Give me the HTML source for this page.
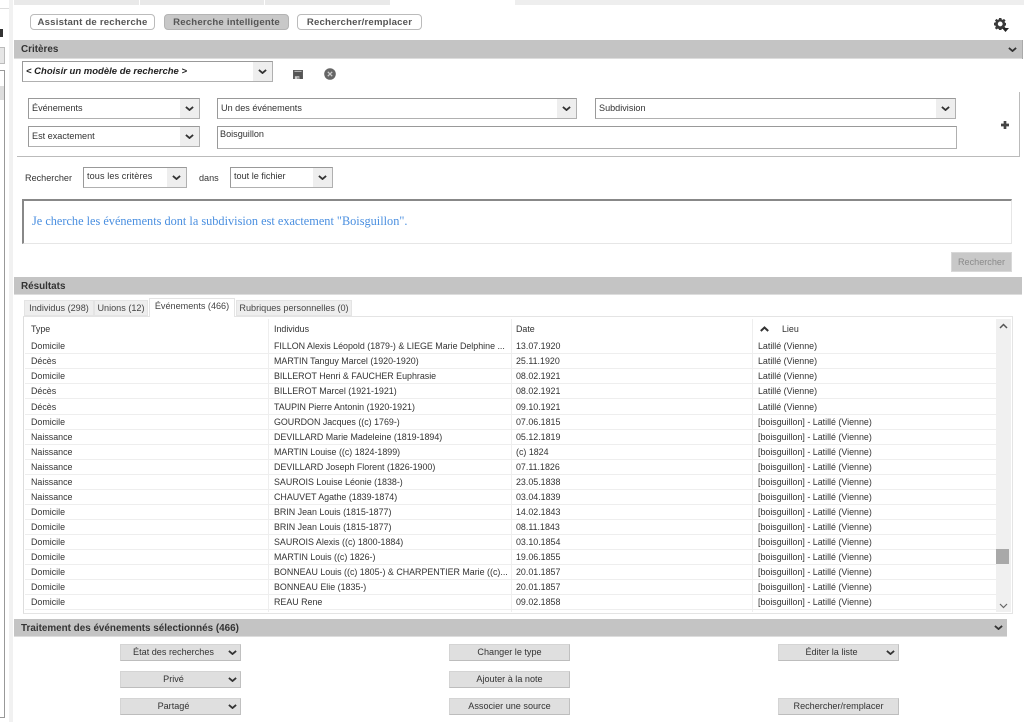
<!DOCTYPE html>
<html lang="fr"><head><meta charset="utf-8"><title>Recherche</title>
<style>
html,body{margin:0;padding:0;background:#fff;width:1024px;height:722px;overflow:hidden}
#p{position:relative;width:1024px;height:722px;overflow:hidden;font-family:"Liberation Sans",sans-serif;font-size:9.1px;color:#333;filter:blur(.35px)}
#p div,#p span,#p svg{position:absolute;box-sizing:border-box;white-space:nowrap}
.band{background:#c4c4c4;height:18px;font-weight:bold;font-size:9.9px;color:#333;line-height:20px;padding-left:7px;border-bottom:1px solid #ddd}
.tb{top:14px;height:16px;width:125px;border:1px solid #bbb;border-radius:4px;text-align:center;line-height:15px;font-size:9.6px;font-weight:bold;color:#555;letter-spacing:.2px}
.sel{height:21px;border:1px solid #b0b0b0;border-top:1.5px solid #999;border-left:1.5px solid #999;background:#fff;line-height:18px;padding-left:3px;color:#333}
.sel i{position:absolute;right:0;top:0;bottom:0;width:19px;background:#eee}
.sel svg{right:5px;top:7px;width:9px;height:5.4px}
.tab{top:300px;height:16px;background:#eee;border:1px solid #e4e4e4;text-align:center;line-height:15px;color:#444;font-size:9.1px}
.btn{width:121px;height:17px;background:#dfdfdf;border:1px solid #d4d4d4;border-right-color:#c0c0c0;border-bottom-color:#bdbdbd;text-align:center;line-height:15px;color:#333;font-size:9.1px}
.btn.d{padding-right:14px}
.btn svg{right:3px;top:5px;width:9px;height:5.4px}
.r{left:25px;width:971px;height:15.05px;border-bottom:1px solid #eee;line-height:14px;font-size:8.9px}
.r span{top:0}
.a{left:6px}.b{left:249px}.c{left:491px}.e{left:733px}
</style></head><body><div id="p">

<!-- top strip -->
<div style="left:14px;top:0;width:125px;height:5px;background:#e9e9e9"></div>
<div style="left:140px;top:0;width:124px;height:5px;background:#e9e9e9"></div>
<div style="left:265px;top:0;width:125px;height:5px;background:#e9e9e9"></div>
<div style="left:515px;top:0;width:509px;height:5px;background:#eee"></div>

<!-- left sidebar -->
<div style="left:9px;top:0;width:4px;height:722px;background:#f1f1f1"></div>
<div style="left:0;top:8px;width:9px;height:1px;background:#ddd"></div>
<div style="left:0;top:29px;width:3px;height:8px;background:#333"></div>
<div style="left:0;top:47px;width:5px;height:17px;background:#e6e6e6;border:1px solid #bbb;border-left:0"></div>
<div style="left:0;top:70px;width:5px;height:648px;background:#fff;border:1px solid #999;border-left:0"></div>
<div style="left:0;top:86px;width:4px;height:14px;background:#ddd"></div>

<!-- top buttons -->
<div class="tb" style="left:30px">Assistant de recherche</div>
<div class="tb" style="left:164px;background:#c8c8c8;border-color:#b4b4b4">Recherche intelligente</div>
<div class="tb" style="left:297px">Rechercher/remplacer</div>
<svg style="left:994px;top:18px" width="12" height="12" viewBox="-0.5 0 13.500 13.500"><path fill="#3a3a3a" fill-rule="evenodd" d="M5.200 0h2.600l.3 1.600 1.200.5L10.700 1l1.800 1.800-1.100 1.400.5 1.200 1.600.3v2.600l-1.600.3-.5 1.200 1.100 1.400-1.800 1.800-1.400-1.100-1.200.5-.3 1.600H5.200l-.3-1.600-1.200-.5-1.400 1.100-1.800-1.800 1.100-1.400-.5-1.200-1.600-.3V5.300l1.600-.3.500-1.200L.5 2.800 2.300 1l1.400 1.100 1.200-.5zM6.500 4a2.700 2.700 0 1 0 0 5.400 2.700 2.700 0 0 0 0-5.400z"/></svg>
<svg style="left:1002px;top:28px;z-index:3" width="7" height="4" viewBox="0 0 7 4"><path fill="#222" d="M0 0h7L3.500 4z"/></svg>

<!-- Critères -->
<div class="band" style="left:14px;top:40px;width:1008px;height:19px">Critères</div>
<div style="left:1022px;top:40px;width:1px;height:19px;background:#aaa"></div>
<svg style="left:1008px;top:47px" width="9" height="5.400" viewBox="0 0 10 6"><path d="M1 1l4 3.500L9 1" fill="none" stroke="#333" stroke-width="2"/></svg>

<div class="sel" style="left:22px;top:61px;width:251px;font-weight:bold;font-style:italic;color:#222;font-size:9.500px;line-height:19px"> &lt; Choisir un modèle de recherche &gt;<i></i><svg viewBox="0 0 10 6"><path d="M1 1l4 3.500L9 1" fill="none" stroke="#333" stroke-width="2"/></svg></div>
<svg style="left:293px;top:70px" width="10" height="9" viewBox="0 0 11 10"><path fill="#555" d="M0 0h11v10H0z"/><path fill="#ccc" d="M1.500 1h8v1h-8zM2 7h5v3H2z"/><path fill="#555" d="M5 8h1v2H5z"/></svg>
<svg style="left:324px;top:68px" width="12" height="12" viewBox="0 0 12 12"><circle cx="6" cy="6" r="5.800" fill="#666"/><path d="M3.800 3.800l4.400 4.400M8.200 3.800L3.800 8.200" stroke="#ccc" stroke-width="1.300"/></svg>

<div style="left:17px;top:156px;width:1003px;height:1px;background:#bbb"></div>
<div style="left:1019px;top:92px;width:1px;height:65px;background:#bbb"></div>

<div class="sel" style="left:28px;top:98px;width:172px">Événements<i></i><svg viewBox="0 0 10 6"><path d="M1 1l4 3.500L9 1" fill="none" stroke="#333" stroke-width="2"/></svg></div>
<div class="sel" style="left:217px;top:98px;width:360px">Un des événements<i></i><svg viewBox="0 0 10 6"><path d="M1 1l4 3.500L9 1" fill="none" stroke="#333" stroke-width="2"/></svg></div>
<div class="sel" style="left:595px;top:98px;width:361px">Subdivision<i></i><svg viewBox="0 0 10 6"><path d="M1 1l4 3.500L9 1" fill="none" stroke="#333" stroke-width="2"/></svg></div>
<div class="sel" style="left:28px;top:126px;width:172px">Est exactement<i></i><svg viewBox="0 0 10 6"><path d="M1 1l4 3.500L9 1" fill="none" stroke="#333" stroke-width="2"/></svg></div>
<div class="sel" style="left:217px;top:126px;width:740px;height:23px;line-height:15px;padding-left:2px">Boisguillon</div>
<svg style="left:1001px;top:121px" width="8" height="8" viewBox="0 0 9 9"><path fill="#444" d="M3 0h3v3h3v3H6v3H3V6H0V3h3z"/></svg>

<span style="left:25px;top:172px;line-height:12px">Rechercher</span>
<div class="sel" style="left:83px;top:167px;width:104px;line-height:16px;letter-spacing:.1px">tous les critères<i></i><svg viewBox="0 0 10 6"><path d="M1 1l4 3.500L9 1" fill="none" stroke="#333" stroke-width="2"/></svg></div>
<span style="left:199px;top:172px;line-height:12px">dans</span>
<div class="sel" style="left:230px;top:167px;width:103px;line-height:16px">tout le fichier<i></i><svg viewBox="0 0 10 6"><path d="M1 1l4 3.500L9 1" fill="none" stroke="#333" stroke-width="2"/></svg></div>

<div style="left:22px;top:199px;width:990px;height:45px;border:1px solid #e6e6e6;border-top:2px solid #888;border-left:2px solid #888;background:#fff"></div>
<span style="left:32px;top:213px;font-family:'Liberation Serif',serif;font-size:12.300px;line-height:16px;color:#4a8fe0">Je cherche les événements dont la subdivision est exactement "Boisguillon".</span>

<div style="left:951px;top:252px;width:61px;height:20px;background:#c8c8c8;border:1px solid #d8d8d8;color:#8a8a8a;text-align:center;line-height:18px;font-size:9.100px">Rechercher</div>

<!-- Résultats -->
<div class="band" style="left:14px;top:277px;width:1008px">Résultats</div>
<div class="tab" style="left:24px;width:70px">Individus (298)</div>
<div class="tab" style="left:94px;width:54px">Unions (12)</div>
<div class="tab" style="left:149px;top:298px;width:86px;height:19px;background:#fff;z-index:2;border-bottom:0;line-height:14px">Événements (466)</div>
<div class="tab" style="left:236px;width:116px">Rubriques personnelles (0)</div>

<div style="left:23px;top:316px;width:990px;height:298px;border:1px solid #e4e4e4;border-left-color:#ddd;background:#fff"></div>
<div style="left:996px;top:319px;width:15px;height:293px;background:#f0f0f0"></div>
<div style="left:996px;top:549px;width:13px;height:15px;background:#a9a9a9"></div>
<svg style="left:999px;top:323px" width="9" height="6" viewBox="0 0 9 6"><path d="M1 5l3.500-3.500L8 5" fill="none" stroke="#555" stroke-width="1.500"/></svg>
<svg style="left:999px;top:603px" width="9" height="6" viewBox="0 0 9 6"><path d="M1 1l3.500 3.500L8 1" fill="none" stroke="#666" stroke-width="1.200"/></svg>

<div style="left:268px;top:319px;width:1px;height:293px;background:#eee"></div>
<div style="left:752px;top:319px;width:1px;height:293px;background:#eee"></div>
<div style="left:511px;top:319px;width:1px;height:293px;background:#eee"></div>

<span style="left:31px;top:323px;line-height:12px;font-size:8.900px">Type</span>
<span style="left:274px;top:323px;line-height:12px;font-size:8.900px">Individus</span>
<span style="left:516px;top:323px;line-height:12px;font-size:8.900px">Date</span>
<svg style="left:760px;top:326px" width="9" height="6" viewBox="0 0 9 6"><path d="M.8 5l3.700-3.500L8.200 5" fill="none" stroke="#333" stroke-width="2"/></svg>
<span style="left:782px;top:323px;line-height:12px;font-size:8.900px">Lieu</span>

<div class="r" style="top:339px"><span class="a">Domicile</span><span class="b">FILLON Alexis Léopold (1879-) &amp; LIEGE Marie Delphine ...</span><span class="c">13.07.1920</span><span class="e">Latillé (Vienne)</span></div>
<div class="r" style="top:354px"><span class="a">Décès</span><span class="b">MARTIN Tanguy Marcel (1920-1920)</span><span class="c">25.11.1920</span><span class="e">Latillé (Vienne)</span></div>
<div class="r" style="top:369px"><span class="a">Domicile</span><span class="b">BILLEROT Henri &amp; FAUCHER Euphrasie</span><span class="c">08.02.1921</span><span class="e">Latillé (Vienne)</span></div>
<div class="r" style="top:384px"><span class="a">Décès</span><span class="b">BILLEROT Marcel (1921-1921)</span><span class="c">08.02.1921</span><span class="e">Latillé (Vienne)</span></div>
<div class="r" style="top:399.500px"><span class="a">Décès</span><span class="b">TAUPIN Pierre Antonin (1920-1921)</span><span class="c">09.10.1921</span><span class="e">Latillé (Vienne)</span></div>
<div class="r" style="top:414.500px"><span class="a">Domicile</span><span class="b">GOURDON Jacques ((c) 1769-)</span><span class="c">07.06.1815</span><span class="e">[boisguillon] - Latillé (Vienne)</span></div>
<div class="r" style="top:429.500px"><span class="a">Naissance</span><span class="b">DEVILLARD Marie Madeleine (1819-1894)</span><span class="c">05.12.1819</span><span class="e">[boisguillon] - Latillé (Vienne)</span></div>
<div class="r" style="top:444.500px"><span class="a">Naissance</span><span class="b">MARTIN Louise ((c) 1824-1899)</span><span class="c">(c) 1824</span><span class="e">[boisguillon] - Latillé (Vienne)</span></div>
<div class="r" style="top:459.500px"><span class="a">Naissance</span><span class="b">DEVILLARD Joseph Florent (1826-1900)</span><span class="c">07.11.1826</span><span class="e">[boisguillon] - Latillé (Vienne)</span></div>
<div class="r" style="top:474.500px"><span class="a">Naissance</span><span class="b">SAUROIS Louise Léonie (1838-)</span><span class="c">23.05.1838</span><span class="e">[boisguillon] - Latillé (Vienne)</span></div>
<div class="r" style="top:489.500px"><span class="a">Naissance</span><span class="b">CHAUVET Agathe (1839-1874)</span><span class="c">03.04.1839</span><span class="e">[boisguillon] - Latillé (Vienne)</span></div>
<div class="r" style="top:504.500px"><span class="a">Domicile</span><span class="b">BRIN Jean Louis (1815-1877)</span><span class="c">14.02.1843</span><span class="e">[boisguillon] - Latillé (Vienne)</span></div>
<div class="r" style="top:519.600px"><span class="a">Domicile</span><span class="b">BRIN Jean Louis (1815-1877)</span><span class="c">08.11.1843</span><span class="e">[boisguillon] - Latillé (Vienne)</span></div>
<div class="r" style="top:534.600px"><span class="a">Domicile</span><span class="b">SAUROIS Alexis ((c) 1800-1884)</span><span class="c">03.10.1854</span><span class="e">[boisguillon] - Latillé (Vienne)</span></div>
<div class="r" style="top:549.700px"><span class="a">Domicile</span><span class="b">MARTIN Louis ((c) 1826-)</span><span class="c">19.06.1855</span><span class="e">[boisguillon] - Latillé (Vienne)</span></div>
<div class="r" style="top:564.700px"><span class="a">Domicile</span><span class="b">BONNEAU Louis ((c) 1805-) &amp; CHARPENTIER Marie ((c)...</span><span class="c">20.01.1857</span><span class="e">[boisguillon] - Latillé (Vienne)</span></div>
<div class="r" style="top:579.800px"><span class="a">Domicile</span><span class="b">BONNEAU Elie (1835-)</span><span class="c">20.01.1857</span><span class="e">[boisguillon] - Latillé (Vienne)</span></div>
<div class="r" style="top:594.800px"><span class="a">Domicile</span><span class="b">REAU Rene</span><span class="c">09.02.1858</span><span class="e">[boisguillon] - Latillé (Vienne)</span></div>

<!-- Traitement -->
<div class="band" style="left:14px;top:619px;width:993px">Traitement des événements sélectionnés (466)</div>
<svg style="left:994px;top:625px" width="9" height="5.400" viewBox="0 0 10 6"><path d="M1 1l4 3.500L9 1" fill="none" stroke="#333" stroke-width="2"/></svg>

<div class="btn d" style="left:120px;top:644px">État des recherches<svg viewBox="0 0 10 6"><path d="M1 1l4 3.500L9 1" fill="none" stroke="#333" stroke-width="2"/></svg></div>
<div class="btn d" style="left:120px;top:671px">Privé<svg viewBox="0 0 10 6"><path d="M1 1l4 3.500L9 1" fill="none" stroke="#333" stroke-width="2"/></svg></div>
<div class="btn d" style="left:120px;top:698px">Partagé<svg viewBox="0 0 10 6"><path d="M1 1l4 3.500L9 1" fill="none" stroke="#333" stroke-width="2"/></svg></div>
<div class="btn" style="left:449px;top:644px">Changer le type</div>
<div class="btn" style="left:449px;top:671px">Ajouter à la note</div>
<div class="btn" style="left:449px;top:698px">Associer une source</div>
<div class="btn d" style="left:778px;top:644px">Éditer la liste<svg viewBox="0 0 10 6"><path d="M1 1l4 3.500L9 1" fill="none" stroke="#333" stroke-width="2"/></svg></div>
<div class="btn" style="left:778px;top:698px">Rechercher/remplacer</div>

</div></body></html>
